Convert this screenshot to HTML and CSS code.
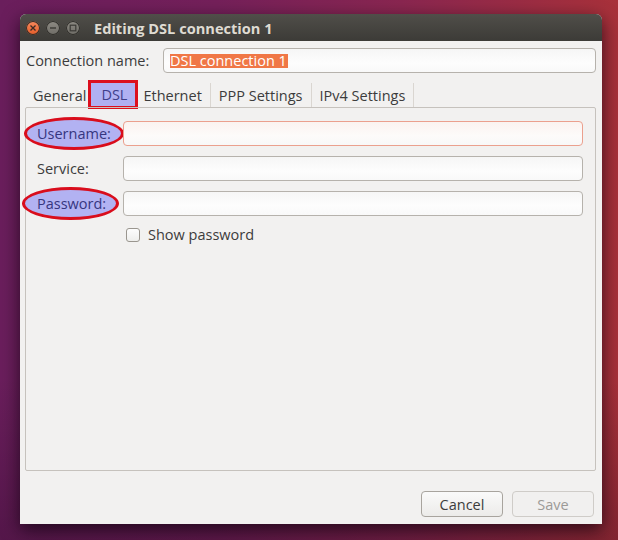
FILE: index.html
```html
<!DOCTYPE html>
<html>
<head>
  <link rel="stylesheet" href="styles.css">
</head>
<body>
  <div class="window">
    <div class="titlebar">
      <div class="win-btns">
        <span class="win-btn close">
          <svg width="8" height="8" viewBox="0 0 8 8"><path d="M1.5 1.5 L6.5 6.5 M6.5 1.5 L1.5 6.5" stroke="#3a2a24" stroke-width="1.3"/></svg>
        </span>
        <span class="win-btn">
          <svg width="8" height="8" viewBox="0 0 8 8"><path d="M1 4 H7" stroke="#3b3a36" stroke-width="1.4"/></svg>
        </span>
        <span class="win-btn">
          <svg width="8" height="8" viewBox="0 0 8 8"><rect x="1.2" y="1.2" width="5.6" height="5.6" fill="none" stroke="#3b3a36" stroke-width="1.2"/></svg>
        </span>
      </div>
      <div class="title">Editing DSL connection 1</div>
    </div>

    <div class="content">
      <div class="conn-row">
        <label class="conn-label">Connection name:</label>
        <div class="entry conn-entry"><span class="selected">DSL connection 1</span></div>
      </div>

      <div class="tabs">
        <div class="tab first">General</div>
        <div class="tab active">DSL</div>
        <div class="tab">Ethernet</div>
        <div class="tab">PPP Settings</div>
        <div class="tab">IPv4 Settings</div>
      </div>

      <div class="notebook">
        <div class="form">
          <div class="field-label"><span class="mark">Username:</span></div>
          <div class="entry focus"></div>

          <div class="field-label">Service:</div>
          <div class="entry"></div>

          <div class="field-label"><span class="mark pw">Password:</span></div>
          <div class="entry"></div>

          <div></div>
          <div class="check-row">
            <span class="checkbox"></span>
            <span>Show password</span>
          </div>
        </div>
      </div>

      <div class="actions">
        <button class="btn">Cancel</button>
        <button class="btn disabled">Save</button>
      </div>
    </div>
  </div>
</body>
</html>
```

FILE: styles.css
```css
body {
  margin: 0;
  width: 618px;
  height: 540px;
  overflow: hidden;
  font-family: 'Open Sans', 'DejaVu Sans', sans-serif;
  background:
    linear-gradient(180deg, rgba(0, 0, 0, 0) 70%, rgba(20, 0, 20, 0.25) 100%),
    linear-gradient(90deg, #6a1e5c 0%, #74205a 35%, #8a2650 65%, #a02e40 90%, #a8313a 100%);
}

.window {
  margin: 14px 0 0 20px;
  width: 582px;
  height: 510px;
  display: flex;
  flex-direction: column;
  background: #f2f1f0;
  border-radius: 6px 6px 0 0;
  box-shadow: 0 6px 18px rgba(10, 0, 10, 0.7);
}

/* title bar */
.titlebar {
  height: 27px;
  display: flex;
  align-items: center;
  padding-left: 6px;
  background: linear-gradient(180deg, #504e49, #3c3b37);
  border-radius: 6px 6px 0 0;
}

.win-btns {
  display: flex;
  gap: 6px;
  margin-right: 14px;
}

.win-btn {
  width: 14px;
  height: 14px;
  border-radius: 50%;
  display: flex;
  align-items: center;
  justify-content: center;
  background: linear-gradient(180deg, #8e8b84, #6e6c66);
  box-shadow: inset 0 0 0 1px #2f2e2a;
}

.win-btn.close {
  background: linear-gradient(180deg, #f6895e, #e45c28);
}

.title {
  color: #dfdbd2;
  font-weight: bold;
  font-size: 14.6px;
}

/* body */
.content {
  flex: 1;
  display: flex;
  flex-direction: column;
  padding: 7px 6px 7px 5px;
  color: #3c3c3c;
  font-size: 14px;
}

.conn-row {
  display: flex;
  align-items: center;
}

.conn-label {
  width: 137px;
  padding-left: 1px;
  font-size: 14.5px;
}

.entry {
  height: 23px;
  border: 1px solid #b6b2ac;
  border-radius: 4px;
  background: linear-gradient(180deg, #f6f6f6, #fdfdfd 60%, #f9f9f9);
  display: flex;
  align-items: center;
}

.conn-entry {
  flex: 1;
  padding-left: 6px;
}

.selected {
  background: #f07746;
  color: #fff;
  font-size: 14.5px;
  line-height: 14px;
  padding: 0 1px 0 0;
}

.entry.focus {
  border-color: #eba08e;
  background: linear-gradient(180deg, #fbf3f0, #fdfbfa 60%, #f8f8f8);
}

/* tabs */
.tabs {
  display: flex;
  margin-top: 10px;
  height: 24px;
}

.tab {
  padding: 0 8px;
  display: flex;
  align-items: center;
  border-right: 1px solid #dad6d1;
  font-size: 14.5px;
}

.tab.first {
  padding: 0 0 0 8px;
  border-right: none;
}

.tab.active {
  margin: 0 0 1px 5px;
  padding: 0 8px 0 10px;
  background: #b0b0f2;
  color: #3e3e8a;
  border: none;
  outline: 3px solid #dc0f1e;
}

.notebook {
  flex: 1;
  border: 1px solid #c6c2bd;
  border-radius: 2px;
  padding: 13px 12px 0 11px;
}

.form {
  display: grid;
  grid-template-columns: 86px 1fr;
  row-gap: 10px;
  align-items: center;
}

.field-label {
  font-size: 14.5px;
}

.mark {
  display: inline-block;
  margin: -7px 0 -7px -13px;
  padding: 4px 10px;
  border: 3px solid #d90d1c;
  border-radius: 50%;
  background: #b2b2f2;
  color: #363680;
}

.mark.pw {
  margin-left: -15px;
  padding: 4px 10px 4px 12px;
}

.check-row {
  display: flex;
  align-items: center;
  gap: 8px;
  margin-top: -1px;
  margin-left: 3px;
  font-size: 14.5px;
}

.checkbox {
  width: 12px;
  height: 12px;
  border: 1px solid #9a968f;
  border-radius: 3px;
  background: linear-gradient(180deg, #fdfdfd, #eeeeec);
}

/* buttons */
.actions {
  display: flex;
  justify-content: flex-end;
  gap: 9px;
  margin-top: 20px;
  padding-right: 2px;
}

.btn {
  width: 82px;
  height: 26px;
  border: 1px solid #a8a49e;
  border-radius: 4px;
  background: linear-gradient(180deg, #fafafa, #ecebe9);
  font-family: 'Open Sans', 'DejaVu Sans', sans-serif;
  font-size: 14.5px;
  color: #3c3c3c;
}

.btn.disabled {
  color: #9c9a97;
  border-color: #cfccc8;
  background: #f1f0ef;
}
```
